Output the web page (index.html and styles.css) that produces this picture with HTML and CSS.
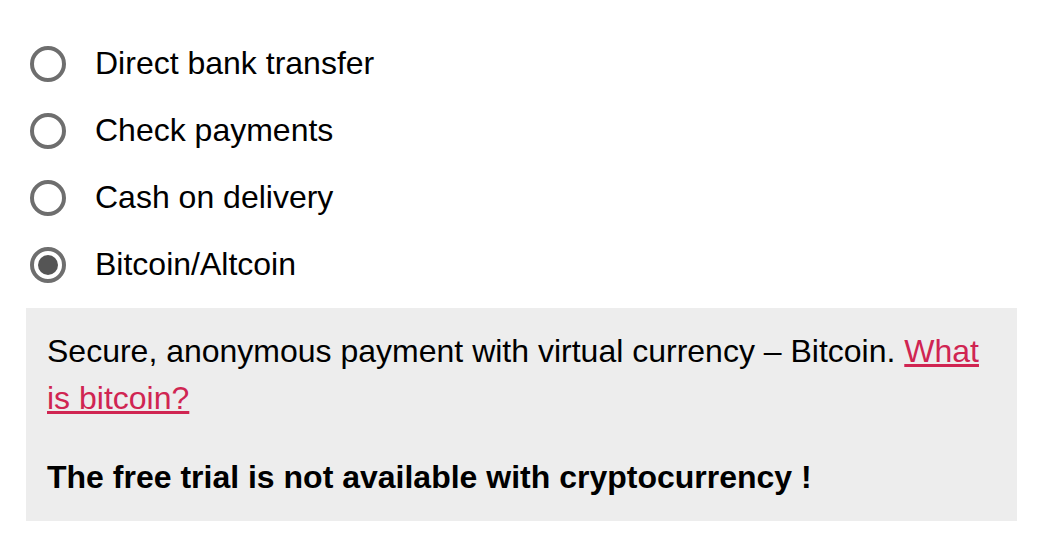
FILE: index.html
```html
<!DOCTYPE html>
<html lang="en">
<head>
<meta charset="utf-8">
<meta name="viewport" content="width=device-width, initial-scale=1">
<title>Payment method</title>
<link rel="stylesheet" href="styles.css">
</head>
<body>
<form class="payment">
  <div class="methods" role="radiogroup" aria-label="Payment method">
    <div class="method"><input class="radio" type="radio" name="method" id="bank"><label class="label" for="bank">Direct bank transfer</label></div>
    <div class="method"><input class="radio" type="radio" name="method" id="check"><label class="label" for="check">Check payments</label></div>
    <div class="method"><input class="radio" type="radio" name="method" id="cash"><label class="label" for="cash">Cash on delivery</label></div>
    <div class="method"><input class="radio" type="radio" name="method" id="bitcoin" checked><label class="label" for="bitcoin">Bitcoin/Altcoin</label></div>
  </div>
  <div class="details">
    <p class="text">Secure, anonymous payment with virtual currency – Bitcoin. <a class="link" href="#bitcoin">What is bitcoin?</a></p>
    <p class="text notice">The free trial is not available with cryptocurrency !</p>
  </div>
</form>
</body>
</html>
```

FILE: styles.css
```css
body {
  margin: 0;
  background: #fff;
  color: #000;
  font: 32px/47px "Liberation Sans", Arial, sans-serif;
}

.payment {
  padding: 40px 28px 32px 26px;
}

.methods {
  display: flex;
  flex-direction: column;
  gap: 20px;
  padding-bottom: 20px;
}

.method {
  display: flex;
  align-items: center;
  gap: 29px;
  padding-left: 4px;
}

.radio {
  appearance: none;
  display: grid;
  place-items: center;
  box-sizing: border-box;
  width: 36px;
  height: 36px;
  margin: 0;
  border: 4px solid #6e6e6e;
  border-radius: 50%;
  background: #fff;
}

.radio:checked::before {
  content: "";
  width: 20px;
  height: 20px;
  border-radius: 50%;
  background: #555;
}

.details {
  padding: 20px 20px 20px 21px;
  background: #ededed;
}

.text {
  margin: 0;
}

.notice {
  margin-top: 32px;
  font-weight: bold;
}

.link {
  color: #d02552;
  text-decoration-thickness: 3px;
  text-decoration-skip-ink: none;
}
```
